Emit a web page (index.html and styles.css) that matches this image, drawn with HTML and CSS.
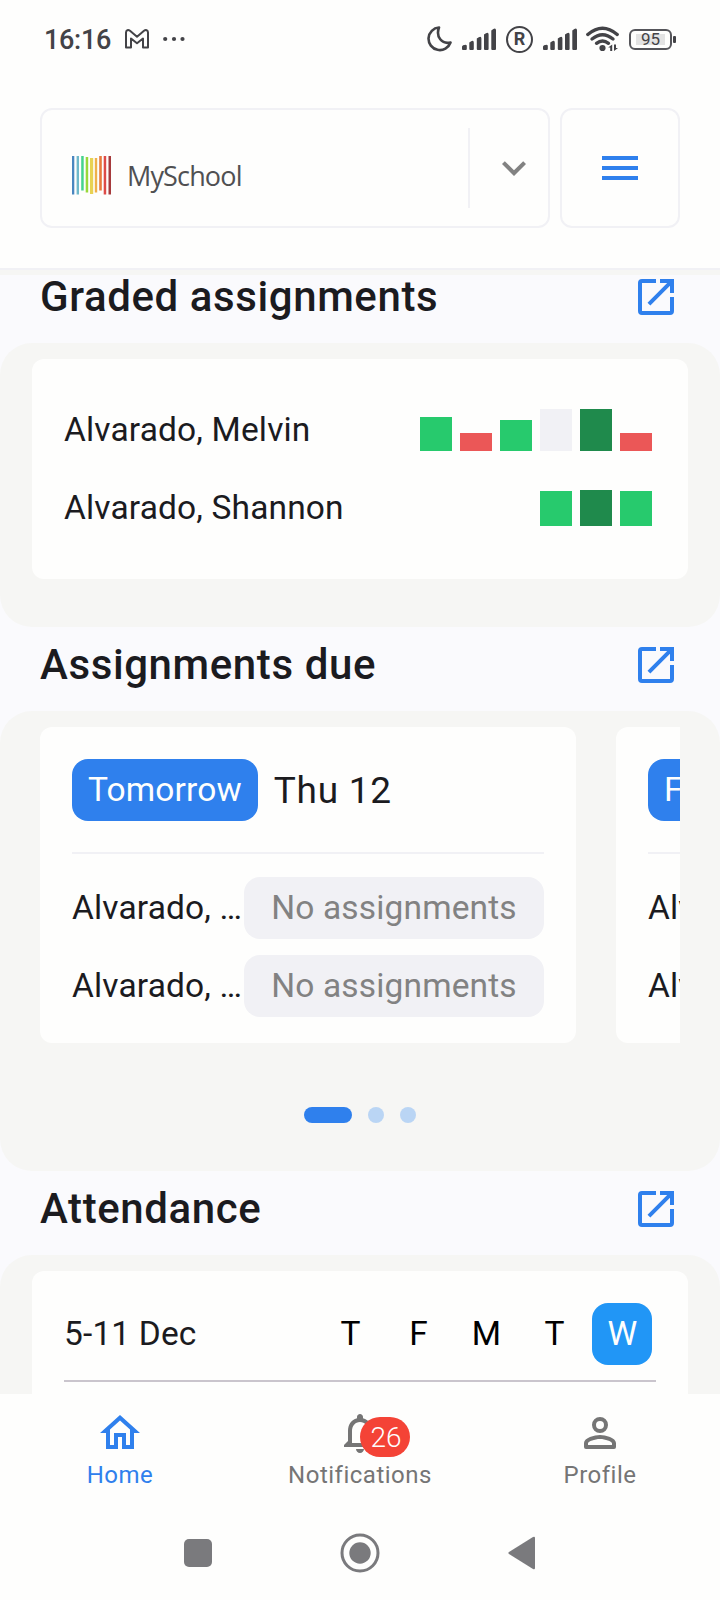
FILE: index.html
```html
<!DOCTYPE html>
<html lang="en">
<head>
<meta charset="utf-8">
<title>MySchool</title>
<link rel="stylesheet" href="styles.css">
</head>
<body>
<svg class="defs" width="0" height="0" aria-hidden="true">
  <symbol id="open" viewBox="0 0 24 24"><path d="M19 19H5V5h7V3H5a2 2 0 0 0-2 2v14a2 2 0 0 0 2 2h14a2 2 0 0 0 2-2v-7h-2v7zM14 3v2h3.59l-9.83 9.83 1.41 1.41L19 6.41V10h2V3h-7z"/></symbol>
  <symbol id="signal" viewBox="0 0 34 22"><path d="M0 18.500l1-1.200q3.800-1.600 3.800.7v3q0 1-1 1H1q-1 0-1-1zM7.300 14.500q4.500-3.500 4.500.3V21q0 1-1 1h-2.500q-1 0-1-1zM14.800 10.500q4.600-3.500 4.600 0V21q0 1-1 1h-2.600q-1 0-1-1zM22 6.500q4.600-3.500 4.600 0V21q0 1-1 1H23q-1 0-1-1zM29.300 2.500q4.700-4 4.700 0V21q0 1-1 1h-2.700q-1 0-1-1z"/></symbol>
</svg>
<header class="top">
  <div class="status">
    <span class="clock">16:16</span>
    <svg class="gmail" width="24" height="20" viewBox="0 0 24 20"><path d="M2.300 1.200Q1 1.700 1 3.500V18.500H6V9.500l6 4.800 6-4.800v9h5V3.500Q23 1.700 21.700 1.200 20.300.8 19 1.800L12 7.700 5 1.800Q3.700.8 2.300 1.200z" fill="none" stroke="#434347" stroke-width="2" stroke-linejoin="round"/></svg>
    <svg class="more" width="22" height="6" viewBox="0 0 22 6"><circle cx="2.200" cy="3" r="2.100"/><circle cx="11" cy="3" r="2.100"/><circle cx="19.500" cy="3" r="2.100"/></svg>
    <div class="status-right">
      <svg class="moon" width="25" height="26" viewBox="0 0 25 26"><path d="M12 1.500A11.300 11.300 0 1 0 23.500 16.500C15 18.500 8.500 11 12 1.500z" fill="none" stroke="#434347" stroke-width="2.600" stroke-linejoin="round"/></svg>
      <svg class="sig1" width="34" height="22"><use href="#signal"/></svg>
      <span class="reg"><span>R</span></span>
      <svg class="sig2" width="34" height="22"><use href="#signal"/></svg>
      <svg class="wifi" width="33" height="26" viewBox="0 0 33 26"><g fill="none" stroke="#434347" stroke-width="3.400" stroke-linecap="round"><path d="M1.800 8.500Q16.500-4 31.200 8.500"/><path d="M6 13Q16.500 4.500 27 13"/><path d="M10.500 17.300Q16.500 12.500 22.500 17.300"/></g><circle cx="16.500" cy="22" r="3.100"/><path d="M26.200 18.500V25h-2v-3.500h-2zM28 25v-6.500h2V22h2z"/></svg>
      <span class="battery"><span>95</span></span>
    </div>
  </div>
  <div class="bar">
    <div class="picker">
      <svg class="logo" width="40" height="39" viewBox="0 0 40 39"><path fill="#4a86c0" d="M0 0h2.300v38.500H0z"/><path fill="#6fb9cb" d="M4.600 0H7v38.500H4.600z"/><path fill="#45d38c" d="M9.200 0h2.500v34.500H9.200z"/><path fill="#99d83a" d="M13.700 1h2.500v35.500h-2.500z"/><path fill="#e8d253" d="M18 2h3.200v36H18z"/><path fill="#efb04a" d="M22.800 2h2.400v34.500h-2.400z"/><path fill="#e87a3c" d="M27.200 0h2.600v34.500h-2.600z"/><path fill="#de4b47" d="M31.700 0h2.500v38.500h-2.500z"/><path fill="#a63a3c" d="M36.500 0h2.500v38.500h-2.500z"/></svg>
      <span class="brand">MySchool</span>
      <span class="drop"><svg width="48" height="48" viewBox="0 0 24 24"><path d="M7.410 8.590L12 13.170l4.590-4.580L18 10l-6 6-6-6z"/></svg></span>
    </div>
    <div class="menu"><svg width="48" height="48" viewBox="0 0 24 24"><path d="M3 6h18v2H3zM3 11h18v2H3zM3 16h18v2H3z"/></svg></div>
  </div>
</header>
<main>
  <div class="heading first"><h2>Graded assignments</h2><svg><use href="#open"/></svg></div>
  <section class="panel">
    <div class="card">
      <div class="row"><span>Alvarado, Melvin</span>
        <div class="bars"><i class="good" style="height:34px"></i><i class="bad" style="height:18px"></i><i class="good" style="height:31px"></i><i class="none" style="height:42px"></i><i class="best" style="height:42px"></i><i class="bad" style="height:18px"></i></div></div>
      <div class="row"><span>Alvarado, Shannon</span>
        <div class="bars"><i class="good" style="height:35px"></i><i class="best" style="height:36px"></i><i class="good" style="height:35px"></i></div></div>
    </div>
  </section>
  <div class="heading"><h2>Assignments due</h2><svg><use href="#open"/></svg></div>
  <section class="panel due">
    <div class="carousel">
      <div class="slide">
        <div class="day"><span class="chip">Tomorrow</span><span class="date">Thu 12</span></div>
        <div class="task"><span>Alvarado, …</span><b>No assignments</b></div>
        <div class="task"><span>Alvarado, …</span><b>No assignments</b></div>
      </div>
      <div class="slide">
        <div class="day"><span class="chip">Fri</span></div>
        <div class="task"><span>Alvarado, …</span></div>
        <div class="task"><span>Alvarado, …</span></div>
      </div>
    </div>
    <div class="dots"><i class="on"></i><i></i><i></i></div>
  </section>
  <div class="heading"><h2>Attendance</h2><svg><use href="#open"/></svg></div>
  <section class="panel">
    <div class="card attendance">
      <div class="week"><span class="range">5-11 Dec</span><span class="d">T</span><span class="d">F</span><span class="d">M</span><span class="d">T</span><span class="d today">W</span></div>
    </div>
  </section>
</main>
<footer>
  <nav class="tabs">
    <div class="tab active"><svg viewBox="0 0 24 24"><path d="M12 5.690l5 4.500V18h-2v-6H9v6H7v-7.810l5-4.500M12 3L2 12h3v8h6v-6h2v6h6v-8h3L12 3z"/></svg><span>Home</span></div>
    <div class="tab"><svg viewBox="0 0 24 24"><path d="M12 22c1.100 0 2-.9 2-2h-4c0 1.100.9 2 2 2zm6-6v-5c0-3.070-1.630-5.640-4.500-6.320V4c0-.83-.67-1.500-1.500-1.500s-1.500.67-1.500 1.500v.68C7.640 5.360 6 7.920 6 11v5l-2 2v1h16v-1l-2-2zm-2 1H8v-6c0-2.480 1.510-4.500 4-4.500s4 2.020 4 4.500v6z"/></svg><em class="badge">26</em><span>Notifications</span></div>
    <div class="tab"><svg viewBox="0 0 24 24"><path d="M12 6a2 2 0 1 1 0 4 2 2 0 0 1 0-4m0-2a4 4 0 1 0 0 8 4 4 0 0 0 0-8zM12 15c2.700 0 5.800 1.290 6 2v1H6v-.99c.2-.72 3.300-2.010 6-2.010m0-2c-2.670 0-8 1.340-8 4v2a1 1 0 0 0 1 1h14a1 1 0 0 0 1-1v-2c0-2.660-5.330-4-8-4z"/></svg><span>Profile</span></div>
  </nav>
  <div class="system">
    <svg width="28" height="28"><rect width="28" height="28" rx="5"/></svg>
    <svg width="40" height="40" viewBox="0 0 40 40"><circle cx="20" cy="20" r="18" fill="none" stroke="#7a7a7d" stroke-width="3"/><circle cx="20" cy="20" r="10.700"/></svg>
    <svg width="28" height="34" viewBox="0 0 28 34"><path d="M1 16Q-.3 17 1 18L25 33q2 .9 2-1V2q0-1.900-2-1z"/></svg>
  </div>
</footer>
</body>
</html>
```
FILE: styles.css
```css
* { box-sizing: border-box; }
body {
  margin: 0;
  width: 720px;
  height: 1600px;
  overflow: hidden;
  display: flex;
  flex-direction: column;
  background: #fafafd;
  color: #1b1b1f;
  font-family: Roboto, sans-serif;
  font-size: 33.500px;
  letter-spacing: 0.150px;
}
svg { display: block; flex: none; }
.defs { position: absolute; }

.top {
  height: 268px;
  flex: none;
  background: #fefefd;
  box-shadow: 0 2px #f1f1f5, 0 7px #f6f6f4;
  z-index: 1;
}
.status {
  height: 78px;
  display: flex;
  align-items: center;
  padding-left: 44px;
  color: #434347;
  fill: #434347;
}
.clock {
  width: 81px;
  padding-top: 2px;
  font-size: 27px;
  font-weight: 500;
  letter-spacing: -0.300px;
}
.more { margin-left: 14px; }
.status-right { display: flex; align-items: center; margin-left: 242px; }
.sig1 { margin-left: 10px; }
.reg {
  width: 27px;
  height: 27px;
  margin: 0 10px;
  border: 2.500px solid #434347;
  border-radius: 50%;
  display: grid;
  place-items: center;
  font-size: 18px;
  line-height: 18px;
  font-weight: 700;
  letter-spacing: 0;
}
.wifi { margin-left: 9px; }
.battery {
  position: relative;
  width: 43px;
  height: 21px;
  margin-left: 10px;
  padding: 3px 5px;
  border: 2px solid #55555a;
  border-radius: 6px;
  font-size: 17px;
  line-height: 11px;
  font-weight: 400;
  letter-spacing: 0;
  text-align: center;
}
.battery span { display: block; background: #e3e3e3; }
.battery::after {
  content: "";
  position: absolute;
  right: -6px;
  top: 5px;
  width: 3px;
  height: 7px;
  border-radius: 1px;
  background: #434347;
}

.bar { display: flex; gap: 10px; padding: 30px 40px 0; }
.picker, .menu {
  height: 120px;
  border: 2px solid #f1f1f5;
  border-radius: 12px;
  display: flex;
  align-items: center;
}
.picker { flex: 1; padding-left: 30px; }
.menu { width: 120px; justify-content: center; fill: #2f80ed; }
.logo { margin-top: 15px; }
.brand {
  margin: 14px 0 0 15px;
  font-family: "Open Sans", sans-serif;
  font-size: 27px;
  letter-spacing: -0.850px;
  color: #505052;
}
.drop {
  height: 80px;
  width: 80px;
  margin-left: auto;
  padding-left: 20px;
  border-left: 2px solid #f1f1f5;
  display: flex;
  align-items: center;
  fill: #828282;
}

main { flex: 1; overflow: hidden; }
.heading {
  display: flex;
  align-items: center;
  justify-content: space-between;
  height: 84px;
  padding: 14px 40px 22px;
}
.heading.first { height: 75px; padding-top: 5px; }
.heading svg { width: 48px; height: 48px; fill: #2f80ed; }
h2 {
  margin: 0;
  font-size: 42px;
  line-height: 48px;
  font-weight: 500;
  letter-spacing: 0.600px;
}
.panel {
  padding: 16px 32px 48px;
  background: #f6f6f4;
  border-radius: 32px;
}
.card { padding: 32px; background: #fefefd; border-radius: 12px; }
.row {
  height: 78px;
  display: flex;
  align-items: center;
  justify-content: space-between;
  padding-right: 4px;
}
.row span { padding-bottom: 2px; }
.bars { display: flex; align-items: flex-end; gap: 8px; }
.bars i { width: 32px; }
.good { background: #27ca6d; }
.bad { background: #eb5757; }
.best { background: #1f8a4c; }
.none { background: #f1f1f5; }

.due { height: 460px; padding: 16px 40px; }
.carousel { display: flex; gap: 40px; overflow: hidden; }
.slide {
  width: 536px;
  height: 316px;
  flex: none;
  padding: 32px;
  background: #fefefd;
  border-radius: 12px;
}
.day {
  display: flex;
  gap: 16px;
  height: 95px;
  margin-bottom: 23px;
  border-bottom: 2px solid #f1f1f5;
}
.chip {
  height: 62px;
  padding: 0 16px;
  border-radius: 16px;
  background: #2f80ed;
  color: #fefefd;
  line-height: 61px;
}
.date { font-size: 37px; line-height: 63px; letter-spacing: 0.700px; }
.task { display: flex; height: 62px; margin-bottom: 16px; line-height: 61px; }
.task span { flex: 1; white-space: nowrap; }
.task b {
  width: 300px;
  flex: none;
  text-align: center;
  border-radius: 16px;
  background: #f1f1f5;
  color: #828282;
  font-weight: 400;
}
.dots { display: flex; justify-content: center; gap: 16px; margin-top: 64px; }
.dots i { width: 16px; height: 16px; border-radius: 8px; background: #bad5f4; }
.dots .on { width: 48px; background: #2f80ed; }

.attendance { height: 260px; }
.week {
  display: flex;
  gap: 8px;
  height: 79px;
  padding-right: 4px;
  border-bottom: 2px solid #cac5cd;
  line-height: 61px;
}
.range { flex: 1; }
.d { width: 60px; height: 62px; padding-left: 1px; text-align: center; color: #000; }
.today { border-radius: 16px; background: #2196f6; color: #fefefd; }

footer { height: 206px; flex: none; background: #fefefd; }
.tabs { display: flex; height: 106px; padding-top: 15px; }
.tab {
  width: 240px;
  position: relative;
  display: flex;
  flex-direction: column;
  align-items: center;
  font-size: 24px;
  line-height: 36px;
  letter-spacing: 0.500px;
  color: #757575;
  fill: #757575;
}
.tab svg { width: 48px; height: 48px; }
.active { color: #2f80ed; fill: #2f80ed; }
.badge {
  position: absolute;
  left: 120px;
  top: 8px;
  width: 50px;
  height: 40px;
  padding-left: 2px;
  border-radius: 20px;
  background: #f44336;
  color: #fefefd;
  font-size: 28px;
  line-height: 41px;
  font-style: normal;
  font-weight: 300;
  letter-spacing: 0;
  text-align: center;
}
.system {
  display: flex;
  align-items: center;
  height: 106px;
  padding-left: 184px;
  gap: 128px;
  fill: #7a7a7d;
}
```
